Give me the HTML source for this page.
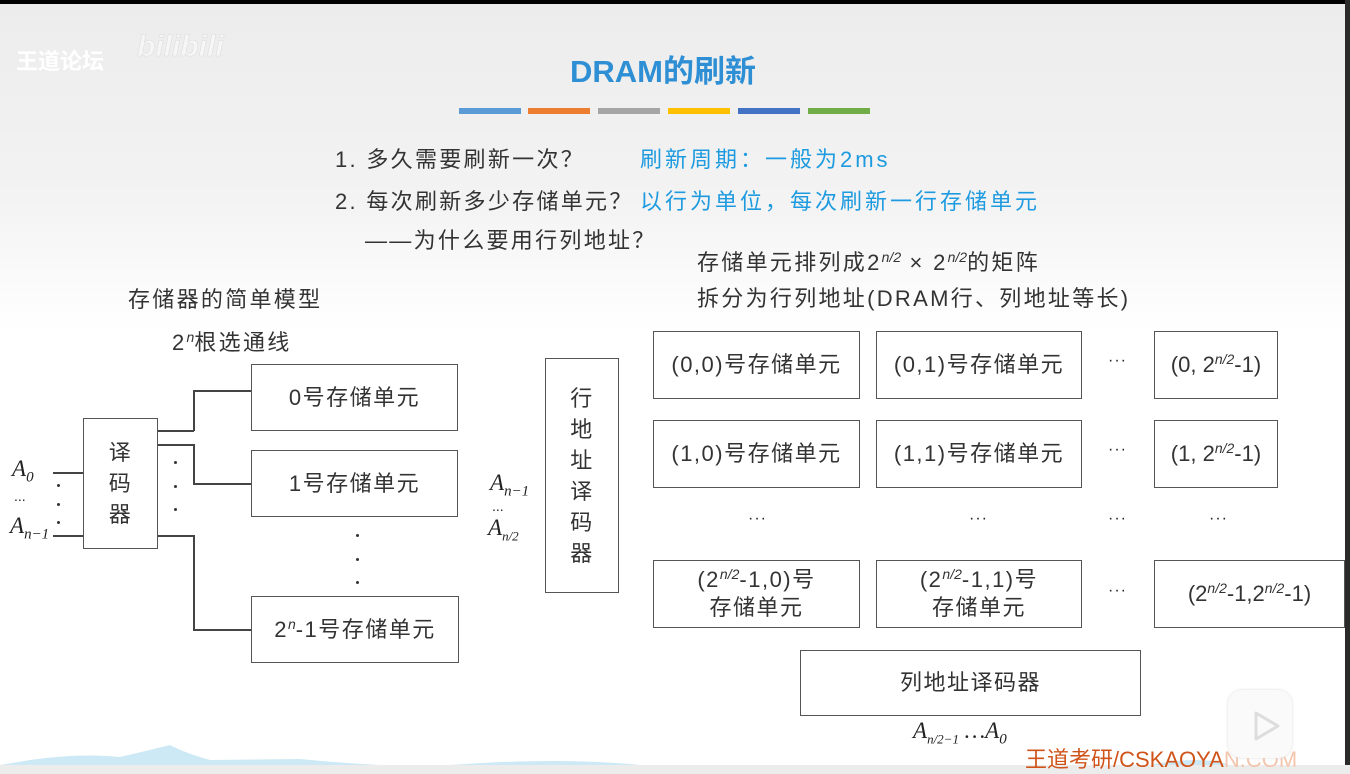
<!DOCTYPE html>
<html><head><meta charset="utf-8"><style>
*{margin:0;padding:0;box-sizing:border-box}
body{width:1350px;height:765px;overflow:hidden;position:relative;background:linear-gradient(#ececec 0,#f3f3f3 200px,#fff 330px,#fff 100%);font-family:"Liberation Sans","Noto Sans CJK SC",sans-serif;color:#222}
.a{position:absolute;white-space:nowrap}
.box{position:absolute;border:1.5px solid #555;background:#fff;display:flex;align-items:center;justify-content:center;font-size:22px;letter-spacing:1.5px;color:#333;text-align:center;line-height:28px}
.ln{position:absolute;background:#444}
.t{font-size:22px;letter-spacing:2.3px;color:#333}
.b{color:#1e9be0;font-size:22px;letter-spacing:3px}
.m{font-family:"Liberation Serif",serif;font-style:italic;font-size:23px;color:#222}
sub{font-size:15px}
sup{font-size:14px;font-style:italic;vertical-align:8px;line-height:0;letter-spacing:0}
.dot{position:absolute;width:3px;height:3px;background:#333;border-radius:50%}
.e{position:absolute;font-size:16px;letter-spacing:1px}
</style></head><body>
<div class="a" style="left:0;top:0;width:1350px;height:4px;background:#000"></div>
<div class="a" style="left:1345px;top:0;width:5px;height:765px;background:#2a2a2a"></div>
<div class="a" style="left:16px;top:44px;font-size:22px;color:#fff;font-weight:bold">王道论坛</div>
<div class="a" style="left:137px;top:30px;font-size:30px;color:#f6f6f6;font-style:italic;font-weight:bold;-webkit-text-stroke:0.6px #ddd">bilibili</div>
<div class="a" style="left:0;width:1326px;text-align:center;top:46px;font-size:31px;font-weight:bold;color:#2f8fd5">DRAM的刷新</div>
<div class="a" style="left:459px;top:108px;width:62px;height:6px;background:#5b9bd5"></div>
<div class="a" style="left:528px;top:108px;width:62px;height:6px;background:#ed7d31"></div>
<div class="a" style="left:598px;top:108px;width:62px;height:6px;background:#a5a5a5"></div>
<div class="a" style="left:668px;top:108px;width:62px;height:6px;background:#ffc000"></div>
<div class="a" style="left:738px;top:108px;width:62px;height:6px;background:#4472c4"></div>
<div class="a" style="left:808px;top:108px;width:62px;height:6px;background:#70ad47"></div>

<div class="a t" style="left:335px;top:142px">1. 多久需要刷新一次？</div>
<div class="a b" style="left:640px;top:142px">刷新周期：一般为2ms</div>
<div class="a t" style="left:335px;top:184px">2. 每次刷新多少存储单元？</div>
<div class="a b" style="left:640px;top:184px">以行为单位，每次刷新一行存储单元</div>
<div class="a t" style="left:365px;top:223px">——为什么要用行列地址？</div>
<div class="a t" style="left:697px;top:245px">存储单元排列成2<sup>n/2</sup> × 2<sup>n/2</sup>的矩阵</div>
<div class="a t" style="left:697px;top:281px">拆分为行列地址(DRAM行、列地址等长)</div>
<div class="a t" style="left:128px;top:282px">存储器的简单模型</div>
<div class="a t" style="left:172px;top:325px">2<sup>n</sup>根选通线</div>

<div class="box" style="left:83px;top:418px;width:75px;height:131px;line-height:31px"><span>译<br>码<br>器</span></div>
<div class="box" style="left:251px;top:364px;width:207px;height:67px"><span>0号存储单元</span></div>
<div class="box" style="left:251px;top:450px;width:207px;height:67px"><span>1号存储单元</span></div>
<div class="box" style="left:251px;top:596px;width:208px;height:67px"><span>2<sup>n</sup>-1号存储单元</span></div>
<div class="ln" style="left:158px;top:430px;width:36px;height:1.5px"></div>
<div class="ln" style="left:193px;top:390px;width:1.5px;height:41px"></div>
<div class="ln" style="left:193px;top:390px;width:58px;height:1.5px"></div>
<div class="ln" style="left:158px;top:444px;width:36px;height:1.5px"></div>
<div class="ln" style="left:193px;top:444px;width:1.5px;height:40px"></div>
<div class="ln" style="left:193px;top:483px;width:58px;height:1.5px"></div>
<div class="ln" style="left:158px;top:535px;width:36px;height:1.5px"></div>
<div class="ln" style="left:193px;top:535px;width:1.5px;height:95px"></div>
<div class="ln" style="left:193px;top:629px;width:58px;height:1.5px"></div>
<div class="ln" style="left:53px;top:472px;width:30px;height:1.5px"></div>
<div class="ln" style="left:53px;top:535px;width:30px;height:1.5px"></div>
<div class="dot" style="left:174px;top:461px"></div><div class="dot" style="left:174px;top:485px"></div><div class="dot" style="left:174px;top:508px"></div>
<div class="dot" style="left:57px;top:484px"></div><div class="dot" style="left:57px;top:503px"></div><div class="dot" style="left:57px;top:521px"></div>
<div class="dot" style="left:356px;top:534px"></div><div class="dot" style="left:356px;top:558px"></div><div class="dot" style="left:356px;top:581px"></div>
<div class="a m" style="left:12px;top:456px">A<sub>0</sub></div>
<div class="a" style="left:14px;top:488px;font-size:14px">...</div>
<div class="a m" style="left:10px;top:513px">A<sub>n−1</sub></div>

<div class="box" style="left:545px;top:358px;width:74px;height:235px;line-height:31px"><span>行<br>地<br>址<br>译<br>码<br>器</span></div>
<div class="a m" style="left:490px;top:470px">A<sub>n−1</sub></div>
<div class="a" style="left:492px;top:498px;font-size:14px">...</div>
<div class="a m" style="left:488px;top:515px">A<sub style="font-size:13px">n/2</sub></div>

<div class="box" style="left:653px;top:331px;width:207px;height:68px"><span>(0,0)号存储单元</span></div>
<div class="box" style="left:876px;top:331px;width:206px;height:68px"><span>(0,1)号存储单元</span></div>
<div class="box" style="left:1154px;top:331px;width:124px;height:68px;letter-spacing:0"><span>(0, 2<sup>n/2</sup>-1)</span></div>
<div class="box" style="left:653px;top:420px;width:207px;height:68px"><span>(1,0)号存储单元</span></div>
<div class="box" style="left:876px;top:420px;width:206px;height:68px"><span>(1,1)号存储单元</span></div>
<div class="box" style="left:1154px;top:420px;width:124px;height:68px;letter-spacing:0"><span>(1, 2<sup>n/2</sup>-1)</span></div>
<div class="box" style="left:653px;top:560px;width:207px;height:68px"><span>(2<sup>n/2</sup>-1,0)号<br>存储单元</span></div>
<div class="box" style="left:876px;top:560px;width:206px;height:68px"><span>(2<sup>n/2</sup>-1,1)号<br>存储单元</span></div>
<div class="box" style="left:1154px;top:560px;width:191px;height:68px;letter-spacing:0"><span>(2<sup>n/2</sup>-1,2<sup>n/2</sup>-1)</span></div>
<div class="e" style="left:1108px;top:352px">···</div>
<div class="e" style="left:1108px;top:441px">···</div>
<div class="e" style="left:1108px;top:582px">···</div>
<div class="e" style="left:748px;top:510px">···</div>
<div class="e" style="left:969px;top:510px">···</div>
<div class="e" style="left:1108px;top:510px">···</div>
<div class="e" style="left:1209px;top:510px">···</div>
<div class="box" style="left:800px;top:650px;width:341px;height:66px"><span>列地址译码器</span></div>
<div class="a m" style="left:913px;top:718px">A<sub style="font-size:13px">n/2−1</sub> …A<sub>0</sub></div>

<svg class="a" style="left:0;top:735px" width="1345" height="30"><path d="M0 30 L30 25 Q80 18 120 22 Q150 15 170 10 Q185 18 210 25 L300 24 Q340 28 380 30 Z" fill="#cde9f5"/><path d="M450 30 Q560 22 640 30Z" fill="#cde9f5"/><path d="M1150 30 Q1200 20 1230 30Z" fill="#cde9f5"/></svg>
<div class="a" style="left:1025px;top:742px;font-size:22px;color:#d0541a">王道考研/CSKAOYA<span style="color:#f3c5ad">N.COM</span></div>
<div class="a" style="left:1228px;top:690px;width:64px;height:68px;background:#fafafa;border-radius:14px;box-shadow:0 0 3px #ddd"></div>
<svg class="a" style="left:1252px;top:710px" width="30" height="32"><path d="M4 3 L26 16 L4 29 Z" fill="none" stroke="#ddd" stroke-width="3" stroke-linejoin="round"/></svg>
</body></html>
